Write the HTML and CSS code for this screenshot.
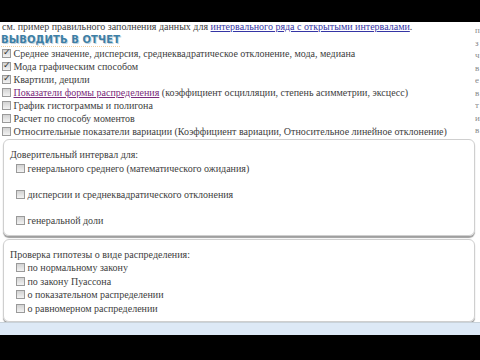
FILE: index.html
```html
<!DOCTYPE html>
<html lang="ru">
<head>
    <meta charset="UTF-8">
    <title>Вывод в отчет</title>
    <link rel="stylesheet" href="styles.css">
</head>
<body>
    <div class="topbar"></div>

    <div class="page">
        <div class="content">
            <p class="note">см. пример правильного заполнения данных для <a href="#">интервального ряда с открытыми интервалами</a>.</p>
            <h2 class="heading">ВЫВОДИТЬ В ОТЧЕТ</h2>

            <ul class="options">
                <li><input type="checkbox" checked> Среднее значение, дисперсия, среднеквадратическое отклонение, мода, медиана</li>
                <li><input type="checkbox" checked> Мода графическим способом</li>
                <li><input type="checkbox" checked> Квартили, децили</li>
                <li><input type="checkbox"> <a href="#" class="visited">Показатели формы распределения</a> (коэффициент осцилляции, степень асимметрии, эксцесс)</li>
                <li><input type="checkbox"> График гистограммы и полигона</li>
                <li><input type="checkbox"> Расчет по способу моментов</li>
                <li><input type="checkbox"> Относительные показатели вариации (Коэффициент вариации, Относительное линейное отклонение)</li>
            </ul>

            <div class="group group-wide">
                <div class="group-title">Доверительный интервал для:</div>
                <div class="row"><input type="checkbox"> генерального среднего (математического ожидания)</div>
                <div class="row"><input type="checkbox"> дисперсии и среднеквадратического отклонения</div>
                <div class="row"><input type="checkbox"> генеральной доли</div>
            </div>

            <div class="group group-tight">
                <div class="group-title">Проверка гипотезы о виде распределения:</div>
                <div class="row"><input type="checkbox"> по нормальному закону</div>
                <div class="row"><input type="checkbox"> по закону Пуассона</div>
                <div class="row"><input type="checkbox"> о показательном распределении</div>
                <div class="row"><input type="checkbox"> о равномерном распределении</div>
            </div>
        </div>

        <!-- соседняя колонка, обрезана краем окна -->
        <div class="edge">
            <span>п</span><span>з</span><span>ч</span><span>в</span><span>е</span><span>в</span><span>т</span><span>и</span><span>в</span>
        </div>
    </div>

    <div class="status"></div>
    <div class="bottombar"></div>
</body>
</html>
```

FILE: styles.css
```css
body {
    margin: 0;
    padding: 0;
    background: #000;
    font-family: "Liberation Serif", "Times New Roman", serif;
    font-size: 10px;
    color: #404040;
}
.topbar {
    height: 22px;
    background: #000;
}
.page {
    height: 300px;
    background: #fff;
    display: flex;
    overflow: hidden;
}
.content {
    flex: 1;
    padding-left: 1px;
    min-width: 0;
}
.note {
    margin: -1px 0 0 1px;
    line-height: 12px;
    white-space: nowrap;
}
a {
    color: #3535a5;
}
a.visited {
    color: #7a2a7a;
}
.heading {
    display: inline-block;
    margin: 0;
    white-space: nowrap;
    font-family: "DejaVu Sans", sans-serif;
    font-size: 10px;
    font-weight: bold;
    letter-spacing: 0.1px;
    line-height: 13px;
    color: #3d7fa6;
    text-shadow: 1px 1px 0 #c9d3da;
    border-bottom: 1px dotted #f3cfa0;
}
.options {
    list-style: none;
    margin: 0;
    padding: 0;
}
.options li {
    line-height: 13px;
    height: 13px;
    white-space: nowrap;
}
input[type=checkbox] {
    appearance: none;
    -webkit-appearance: none;
    width: 9px;
    height: 9px;
    margin: 0 0 0 1px;
    border: 1px solid #9a9a9a;
    background: linear-gradient(#d2d2d2, #f2f2f2);
    vertical-align: -1px;
    position: relative;
}
input[type=checkbox]:checked::after {
    content: '✓';
    position: absolute;
    left: 0;
    top: -3px;
    font-family: "DejaVu Sans", sans-serif;
    font-size: 9px;
    color: #333;
}
.group {
    box-sizing: border-box;
    margin: 2px 0 0 2px;
    border: 1px solid #cfcfcf;
    border-radius: 6px;
    box-shadow: 0 2px 1px #9f9f9f;
    padding: 8px 0 0 6px;
}
.group-title {
    line-height: 13px;
}
.group .row {
    line-height: 13px;
    padding-left: 5px;
    white-space: nowrap;
}
.group-wide {
    margin-top: 1px;
    height: 97px;
}
.group-wide .row {
    margin-top: 13px;
}
.group-wide .group-title + .row {
    margin-top: 1px;
}
.group-tight {
    margin-top: 3px;
    height: 83px;
}
.group-tight .row {
    line-height: 13.5px;
}
.edge {
    width: 5px;
    padding-top: 2px;
    overflow: hidden;
    display: flex;
    flex-direction: column;
    color: #888;
    font-size: 9px;
    line-height: 12px;
}
.edge span {
    height: 12.5px;
}
.status {
    height: 12px;
    background: #dde9f6;
    border-top: 1px solid #c8d2da;
}
.bottombar {
    height: 25px;
    background: #000;
}
```
